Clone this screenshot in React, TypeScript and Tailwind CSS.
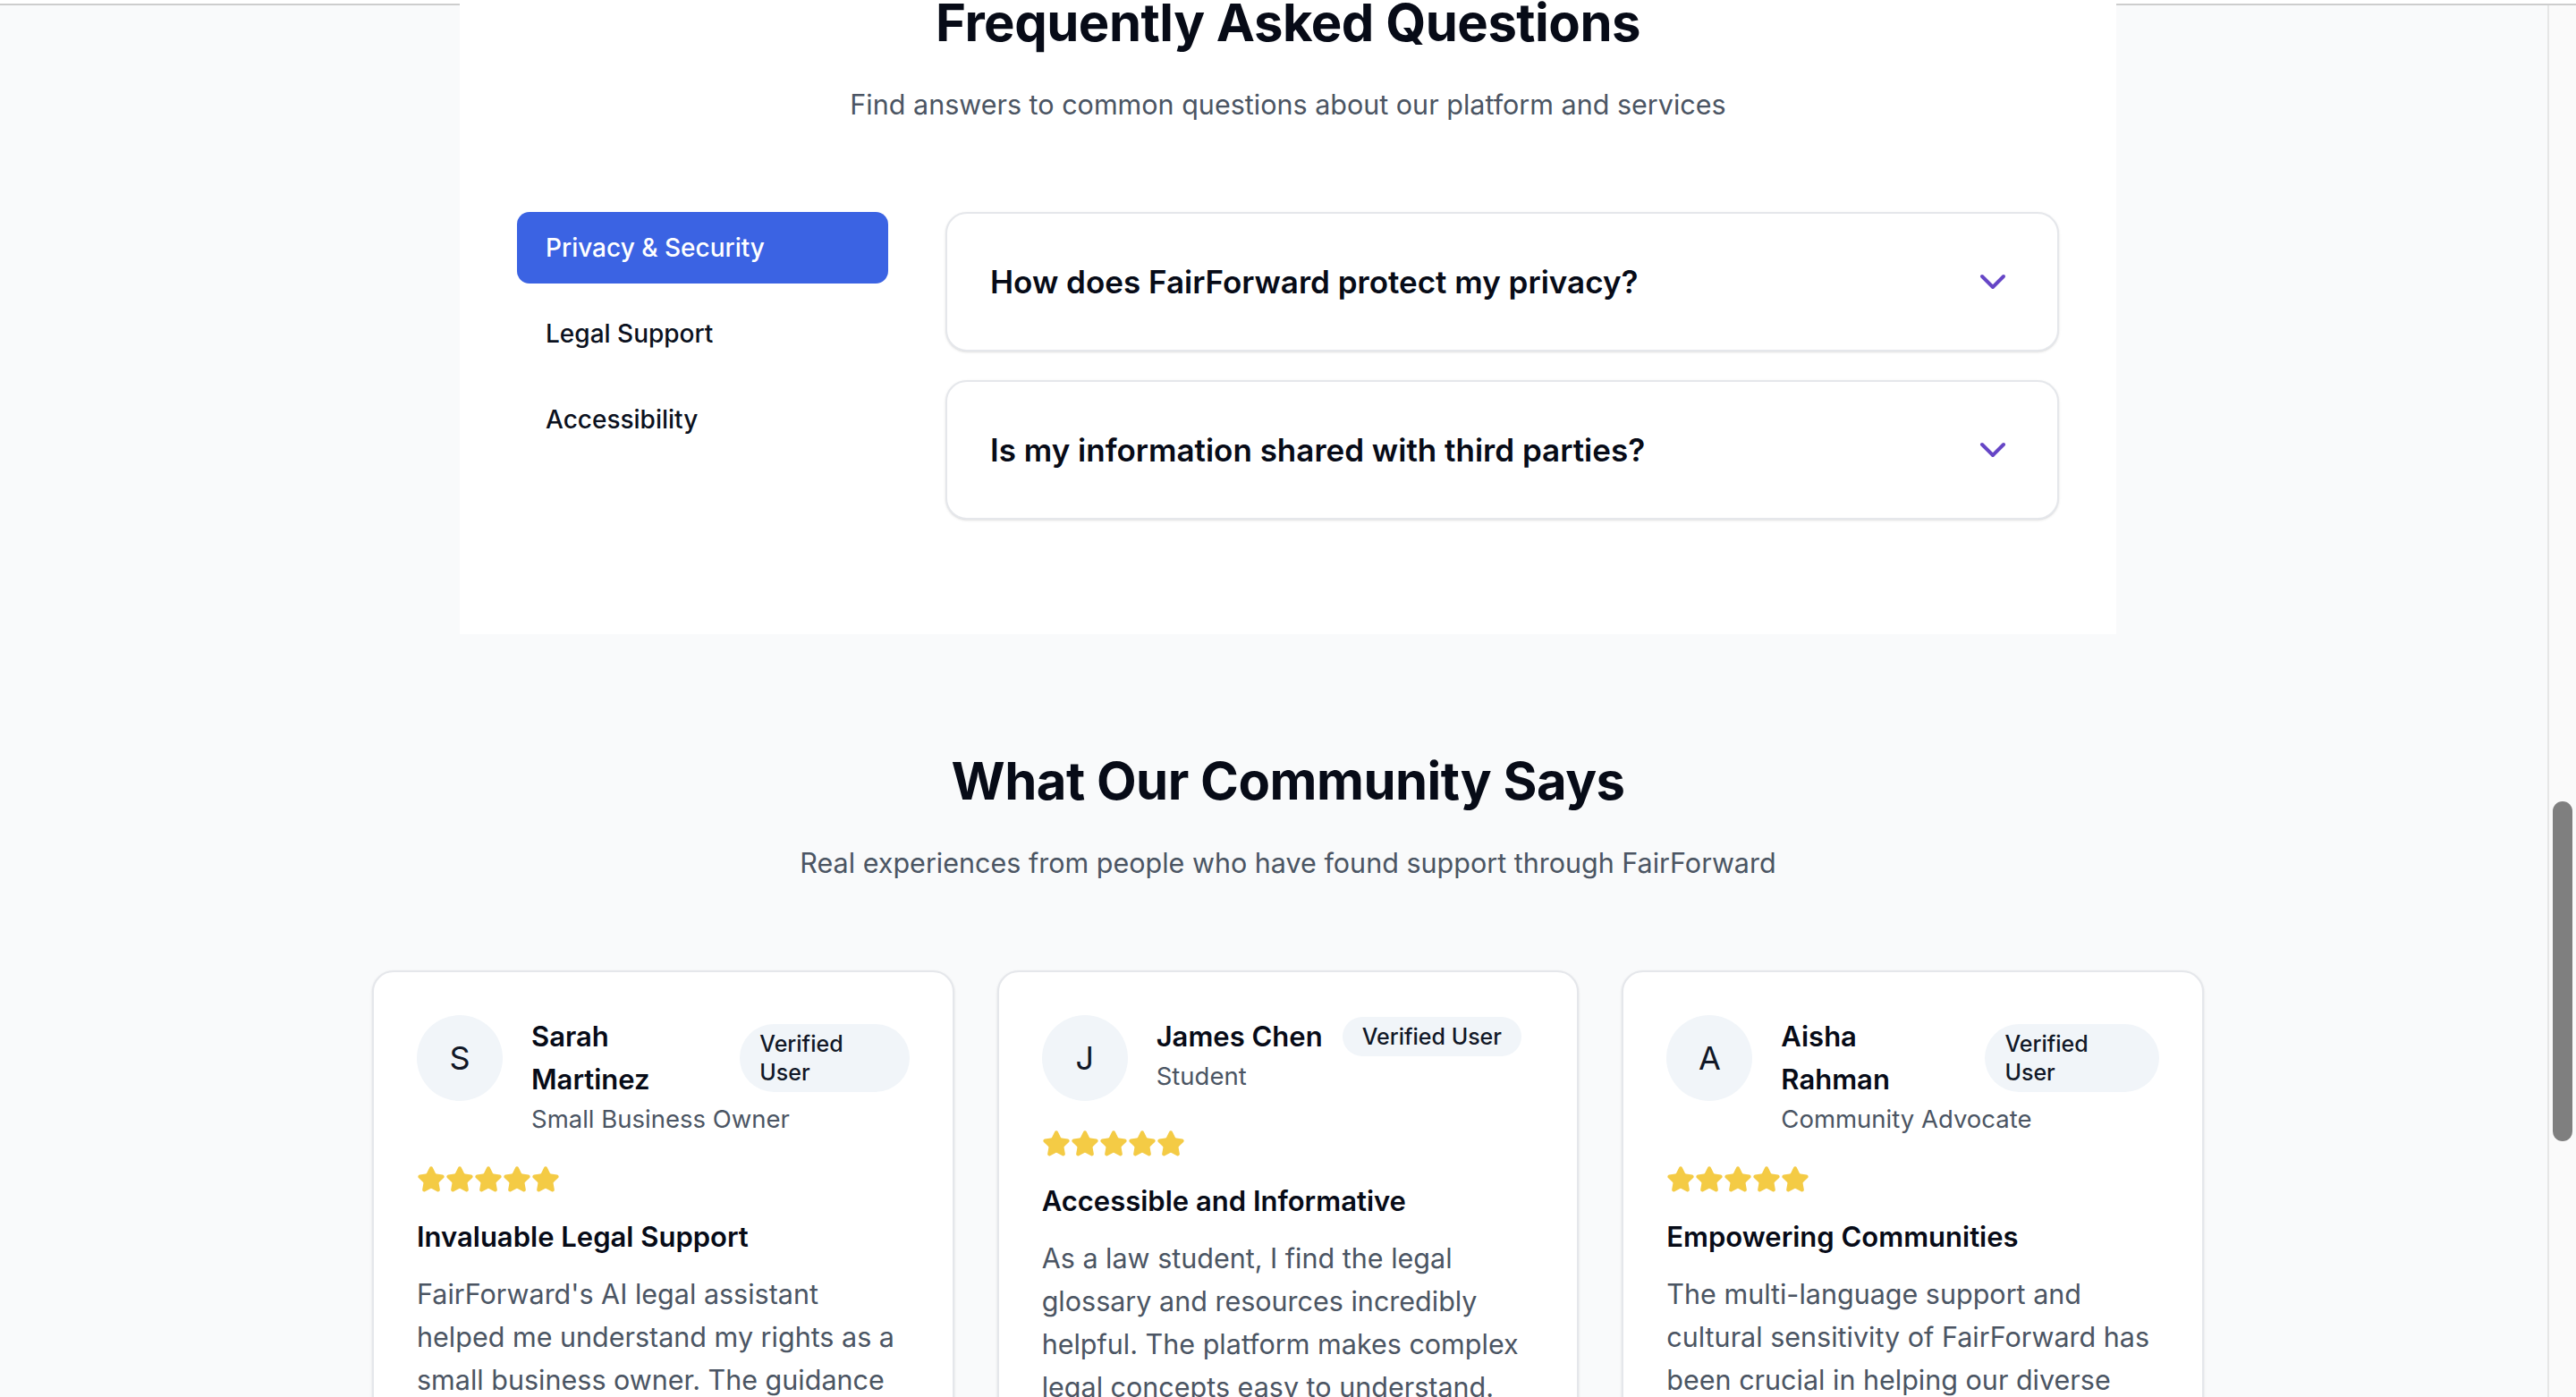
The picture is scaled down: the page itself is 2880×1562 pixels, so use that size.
import { ChevronDown, Star } from 'lucide-react'

const tabs = ['Privacy & Security', 'Legal Support', 'Accessibility']

const questions = [
  'How does FairForward protect my privacy?',
  'Is my information shared with third parties?',
]

const testimonials = [
  {
    initial: 'S',
    name: 'Sarah Martinez',
    role: 'Small Business Owner',
    title: 'Invaluable Legal Support',
    text: "FairForward's AI legal assistant helped me understand my rights as a small business owner. The guidance was clear, practical and saved me a lot of stress.",
  },
  {
    initial: 'J',
    name: 'James Chen',
    role: 'Student',
    title: 'Accessible and Informative',
    text: 'As a law student, I find the legal glossary and resources incredibly helpful. The platform makes complex legal concepts easy to understand.',
  },
  {
    initial: 'A',
    name: 'Aisha Rahman',
    role: 'Community Advocate',
    title: 'Empowering Communities',
    text: 'The multi-language support and cultural sensitivity of FairForward has been crucial in helping our diverse community access the legal help they need.',
  },
]

function SectionHeading({ title, subtitle }: { title: string; subtitle: string }) {
  return (
    <div className="text-center">
      <h2 className="text-[58px] leading-[72px] font-bold text-[#070b17] tracking-[-0.5px]">{title}</h2>
      <p className="mt-[32px] text-[30.5px] leading-[48px] text-[#4b5563]">{subtitle}</p>
    </div>
  )
}

export default function App() {
  const active = 0

  return (
    <div className="relative h-[1562px] overflow-hidden bg-[#f9fafb] font-['Inter',sans-serif]">
      <div className="h-[4px] bg-white" />
      <div className="h-[2px] bg-[#cdcdcd]" />

      {/* FAQ */}
      <section className="mx-auto w-[1852px] bg-white px-[64px] pb-[128px]">
        <div className="-mt-[17px]">
          <SectionHeading
            title="Frequently Asked Questions"
            subtitle="Find answers to common questions about our platform and services"
          />
        </div>

        <div className="mt-[96px] grid grid-cols-[415px_1fr] gap-x-[64px]">
          <div className="flex flex-col gap-[16px]">
            {tabs.map((tab, i) => (
              <button
                key={tab}
                className={`h-[80px] rounded-[14px] px-[32px] text-left text-[28px] font-medium ${
                  i === active ? 'bg-[#3b63e3] text-white' : 'text-[#0b1120]'
                }`}
              >
                {tab}
              </button>
            ))}
          </div>

          <div className="flex flex-col gap-[32px]">
            {questions.map((q) => (
              <div
                key={q}
                className="flex items-center justify-between rounded-[24px] border-2 border-[#e5e7eb] bg-white p-[48px] shadow-sm"
              >
                <span className="text-[35px] leading-[56px] font-semibold text-[#070b17]">{q}</span>
                <ChevronDown className="text-[#6646c6]" size={48} strokeWidth={2} />
              </div>
            ))}
          </div>
        </div>
      </section>

      {/* Testimonials */}
      <section className="pt-[128px]">
        <SectionHeading
          title="What Our Community Says"
          subtitle="Real experiences from people who have found support through FairForward"
        />

        <div className="mx-auto mt-[96px] grid w-[2048px] grid-cols-3 gap-[48px]">
          {testimonials.map((t) => (
            <div key={t.name} className="rounded-[24px] border-2 border-[#e5e7eb] bg-white p-[48px] shadow-sm">
              <div className="mb-[32px] flex items-start gap-[32px]">
                <div className="flex h-[96px] w-[96px] shrink-0 items-center justify-center rounded-full bg-[#f1f5f9] text-[36px] text-[#111827]">
                  {t.initial}
                </div>
                <div className="min-w-0 flex-1">
                  <div className="flex items-center gap-[22px]">
                    <h3 className="text-[31px] leading-[48px] font-semibold text-[#070b17]">{t.name}</h3>
                    <span className="rounded-full bg-[#f1f5f9] px-[22px] py-[6px] text-[25px] leading-[32px] font-medium text-[#111827]">
                      Verified User
                    </span>
                  </div>
                  <p className="text-[27.5px] leading-[40px] text-[#4b5563]">{t.role}</p>
                </div>
              </div>

              <div className="mb-[24px] flex">
                {[...Array(5)].map((_, i) => (
                  <Star key={i} size={32} className="fill-[#f4cb45] text-[#f4cb45]" />
                ))}
              </div>

              <h4 className="mb-[16px] text-[31px] leading-[48px] font-semibold text-[#070b17]">{t.title}</h4>
              <p className="text-[30.5px] leading-[48px] text-[#4b5563]">{t.text}</p>
            </div>
          ))}
        </div>
      </section>

      {/* overlay scrollbar */}
      <div className="absolute bottom-0 right-0 top-[6px] w-[32px] border-l-2 border-[#e6e6e6] bg-[#fafafa]">
        <div className="ml-[4px] mt-[890px] h-[380px] w-[22px] rounded-full bg-[#7f7f7f]" />
      </div>
    </div>
  )
}
